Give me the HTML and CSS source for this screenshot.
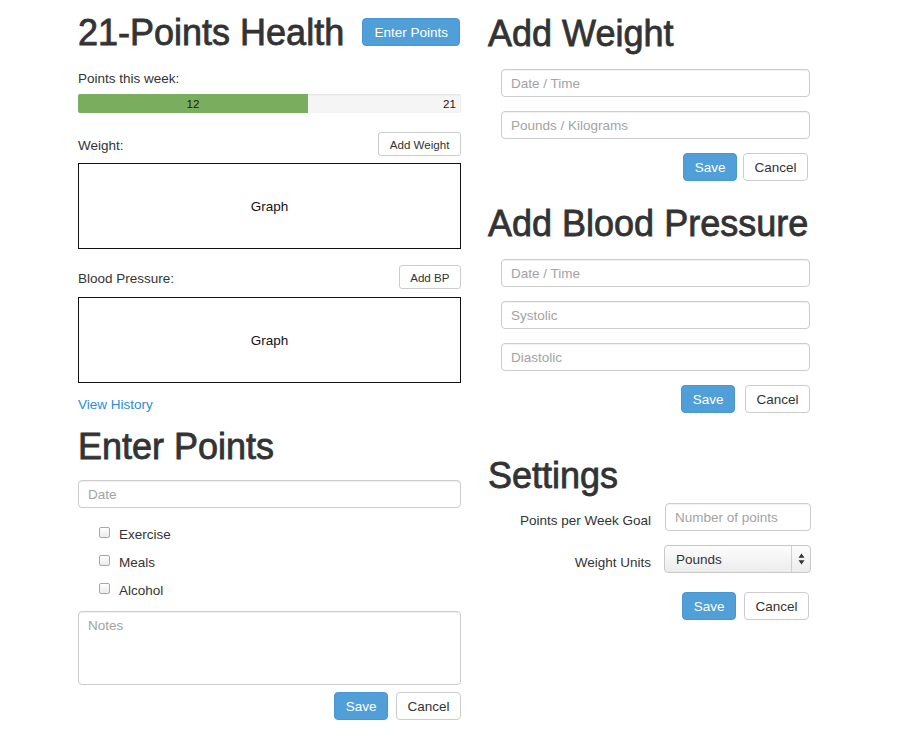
FILE: index.html
```html
<!DOCTYPE html>
<html lang="en">
<head>
<meta charset="utf-8">
<title>21-Points Health</title>
<link rel="stylesheet" href="styles.css">
</head>
<body>
<div class="page">
  <div class="col-left">
    <div class="title-row">
      <h1 class="heading title">21-Points Health</h1>
      <button class="btn btn-primary" type="button">Enter Points</button>
    </div>
    <div class="week-label">Points this week:</div>
    <div class="progress">
      <div class="progress-fill" style="width:60%">12</div>
      <div class="progress-goal">21</div>
    </div>

    <div class="graph-head">
      <span>Weight:</span>
      <button class="btn btn-sm" type="button">Add Weight</button>
    </div>
    <div class="graph">Graph</div>

    <div class="graph-head bp-head">
      <span>Blood Pressure:</span>
      <button class="btn btn-sm" type="button">Add BP</button>
    </div>
    <div class="graph graph-bp">Graph</div>

    <a class="history-link" href="#">View History</a>

    <h1 class="heading points-heading">Enter Points</h1>
    <form class="points-form">
      <input class="field" type="text" placeholder="Date">
      <div class="checks">
        <label class="check"><input type="checkbox">Exercise</label>
        <label class="check"><input type="checkbox">Meals</label>
        <label class="check"><input type="checkbox">Alcohol</label>
      </div>
      <textarea class="field notes" placeholder="Notes"></textarea>
      <div class="actions">
        <button class="btn btn-primary" type="button">Save</button>
        <button class="btn" type="button">Cancel</button>
      </div>
    </form>
  </div>

  <div class="col-right">
    <h1 class="heading">Add Weight</h1>
    <form class="side-form">
      <input class="field" type="text" placeholder="Date / Time">
      <input class="field" type="text" placeholder="Pounds / Kilograms">
      <div class="actions">
        <button class="btn btn-primary" type="button">Save</button>
        <button class="btn" type="button">Cancel</button>
      </div>
    </form>

    <h1 class="heading bp-heading">Add Blood Pressure</h1>
    <form class="side-form">
      <input class="field" type="text" placeholder="Date / Time">
      <input class="field" type="text" placeholder="Systolic">
      <input class="field" type="text" placeholder="Diastolic">
      <div class="actions actions-wide">
        <button class="btn btn-primary" type="button">Save</button>
        <button class="btn" type="button">Cancel</button>
      </div>
    </form>

    <h1 class="heading settings-heading">Settings</h1>
    <form class="settings">
      <label class="settings-label" for="goal">Points per Week Goal</label>
      <input class="field" id="goal" type="text" placeholder="Number of points">
      <label class="settings-label" for="units">Weight Units</label>
      <div class="select-wrap">
        <select id="units" class="select">
          <option>Pounds</option>
          <option>Kilograms</option>
        </select>
        <span class="select-arrows">
          <svg width="7" height="12" viewBox="0 0 7 12"><path d="M3.5 0.5 L6.5 4.8 L0.5 4.8 Z M3.5 11.5 L6.5 7.2 L0.5 7.2 Z" fill="#333"/></svg>
        </span>
      </div>
      <div class="actions settings-actions">
        <button class="btn btn-primary" type="button">Save</button>
        <button class="btn" type="button">Cancel</button>
      </div>
    </form>
  </div>
</div>
</body>
</html>
```

FILE: styles.css
```css
html, body {
  margin: 0;
  padding: 0;
  background: #fff;
}

body {
  font-family: "Liberation Sans", Arial, Helvetica, sans-serif;
  font-size: 13.5px;
  color: #333;
}

.page {
  display: flex;
  gap: 27px;
  padding-left: 78px;
}

.col-left {
  width: 383px;
  padding-top: 12px;
}

.col-right {
  width: 335px;
  padding-top: 14px;
}

.heading {
  margin: 0;
  font-size: 36px;
  line-height: 40px;
  font-weight: 400;
  color: #333;
  -webkit-text-stroke: 0.8px #333;
}

.title {
  padding-top: 2px;
}

.title-row {
  display: flex;
  justify-content: space-between;
  align-items: center;
  height: 40px;
}

.week-label {
  margin-top: 17px;
  line-height: 20px;
}

.progress {
  margin-top: 5px;
  height: 19px;
  display: flex;
  background: #f5f5f5;
  box-shadow: inset 0 1px 2px rgba(0, 0, 0, 0.08);
  border-radius: 2px;
  overflow: hidden;
  font-size: 11.6px;
  line-height: 19px;
  color: #1a1a1a;
}

.progress-fill {
  background: #7aae5e;
  text-align: center;
}

.progress-goal {
  flex: 1;
  text-align: right;
  padding-right: 5px;
}

.graph-head {
  margin-top: 19px;
  display: flex;
  justify-content: space-between;
  align-items: flex-end;
}

.graph-head span {
  line-height: 20px;
}

.bp-head {
  margin-top: 16px;
}

.graph {
  margin-top: 7px;
  height: 86px;
  box-sizing: border-box;
  border: 1px solid #111;
  display: flex;
  align-items: center;
  justify-content: center;
  color: #111;
}

.graph-bp {
  margin-top: 8px;
}

.btn {
  box-sizing: border-box;
  height: 28px;
  padding: 0 10.5px;
  font-family: inherit;
  font-size: 13.5px;
  color: #333;
  background: #fff;
  border: 1px solid #ccc;
  border-radius: 4px;
  cursor: pointer;
}

.title-row .btn {
  padding: 0 11px;
  margin-right: 1px;
}

.btn-sm {
  height: 24px;
  padding: 0 10.5px;
  font-size: 11.6px;
  border-radius: 3px;
}

.btn-primary {
  background: #519fd8;
  border-color: #4a96d0;
  color: #fff;
}

.history-link {
  display: block;
  margin-top: 12px;
  line-height: 20px;
  color: #2a8dd4;
  text-decoration: none;
}

.points-heading {
  margin-top: 12px;
}

.field {
  display: block;
  width: 100%;
  box-sizing: border-box;
  height: 28px;
  margin: 0;
  padding: 0 9px;
  font-family: inherit;
  font-size: 13.5px;
  color: #333;
  background: #fff;
  border: 1px solid #ccc;
  border-radius: 4px;
  box-shadow: inset 0 1px 1px rgba(0, 0, 0, 0.06);
}

.field::placeholder {
  color: #a3a3a3;
}

.points-form {
  margin-top: 13px;
}

.checks {
  margin-top: 12px;
  padding-left: 21px;
}

.check {
  display: flex;
  align-items: center;
  height: 28px;
}

.check input {
  appearance: none;
  -webkit-appearance: none;
  box-sizing: border-box;
  width: 11px;
  height: 11px;
  margin: 0 9px 0 0;
  border: 1px solid #a8a8a8;
  border-radius: 2px;
  background: linear-gradient(#fff, #ebebeb);
  position: relative;
  top: -2px;
}

.notes {
  height: 74px;
  margin-top: 7px;
  padding: 6px 9px;
  resize: none;
}

.actions {
  display: flex;
  justify-content: flex-end;
  gap: 8px;
  margin-top: 7px;
  padding-right: 0;
}

.side-form {
  padding: 0 13px;
  margin-top: 15px;
}

.side-form .field + .field {
  margin-top: 14px;
}

.side-form .actions {
  margin-top: 14px;
  gap: 6px;
  padding-right: 2px;
}

.side-form .actions-wide {
  gap: 10px;
  padding-right: 0;
}

.bp-heading {
  margin-top: 23px;
}

.settings-heading {
  margin-top: 43px;
}

.settings {
  display: grid;
  grid-template-columns: 150px 146px;
  column-gap: 14px;
  row-gap: 14px;
  padding: 0 13px;
  margin-top: 7px;
}

.settings-label {
  align-self: center;
  text-align: right;
  line-height: 20px;
  padding-top: 7px;
}

.select-wrap {
  position: relative;
  height: 28px;
  box-sizing: border-box;
  margin-left: -1px;
  border: 1px solid #c8c8c8;
  border-radius: 4px;
  background: linear-gradient(#fdfdfd, #ececec);
}

.select {
  appearance: none;
  -webkit-appearance: none;
  width: 100%;
  height: 100%;
  margin: 0;
  padding: 0 11px;
  border: 0;
  background: transparent;
  font-family: inherit;
  font-size: 13.5px;
  color: #333;
}

.select-arrows {
  position: absolute;
  top: 0;
  right: 0;
  bottom: 0;
  width: 18px;
  border-left: 1px solid #d0d0d0;
  display: flex;
  align-items: center;
  justify-content: center;
  pointer-events: none;
}

.settings-actions {
  grid-column: 1 / -1;
  margin-top: 5px;
  gap: 8px;
  padding-right: 2px;
}
```
